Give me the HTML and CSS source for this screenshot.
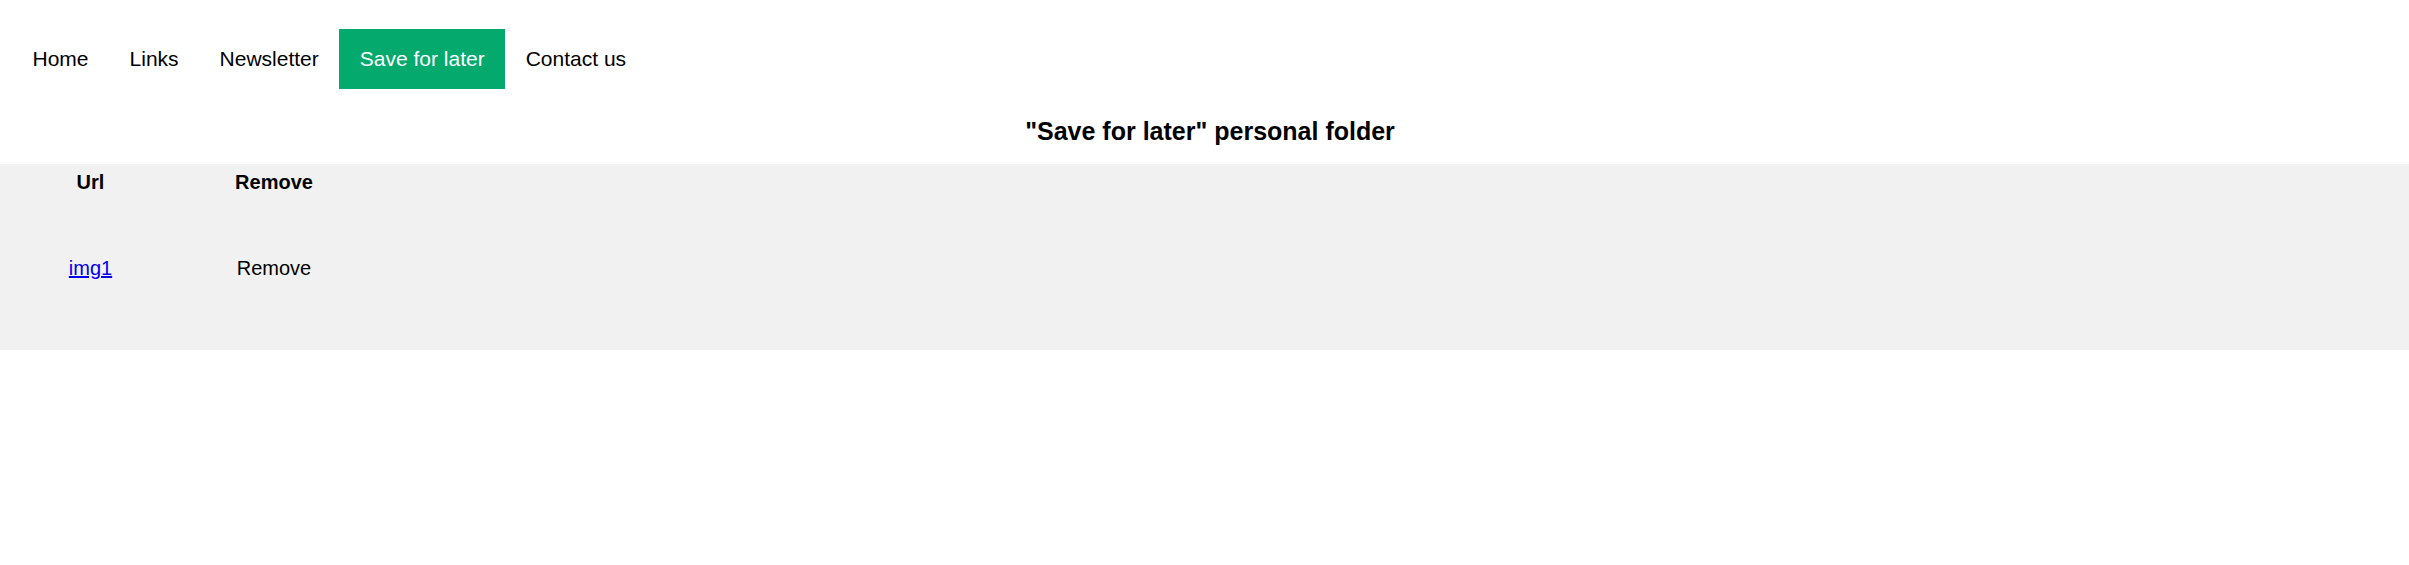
FILE: index.html
```html
<!DOCTYPE html>
<html lang="en">
<head>
<meta charset="utf-8">
<title>Save for later</title>
<link rel="stylesheet" href="styles.css">
</head>
<body>
<nav class="topnav">
  <a href="#" class="nav-link">Home</a>
  <a href="#" class="nav-link">Links</a>
  <a href="#" class="nav-link">Newsletter</a>
  <a href="#" class="nav-link active">Save for later</a>
  <a href="#" class="nav-link">Contact us</a>
</nav>
<h2 class="title">"Save for later" personal folder</h2>
<div class="saved">
  <table class="saved-table">
    <thead>
      <tr><th class="col-url">Url</th><th class="col-remove">Remove</th></tr>
    </thead>
    <tbody>
      <tr><td><a href="#" class="item-link">img1</a></td><td>Remove</td></tr>
    </tbody>
  </table>
</div>
</body>
</html>
```
FILE: styles.css
```css
html, body {
  margin: 0;
  padding: 0;
  background: #ffffff;
  font-family: "Liberation Sans", Arial, sans-serif;
  color: #000000;
}

.topnav {
  display: flex;
  margin: 29px 0 0 12px;
}

.nav-link {
  display: block;
  padding: 18px 20.5px;
  font-size: 21px;
  line-height: 24px;
  color: #000000;
  text-decoration: none;
}

.nav-link.active {
  background: #04aa6d;
  color: #ffffff;
}

.title {
  margin: 28px 0 18px;
  font-size: 25px;
  line-height: 29px;
  font-weight: bold;
  text-align: center;
  padding-left: 11px;
}

.saved {
  background: #f1f1f1;
}

.saved-table {
  border-collapse: collapse;
  font-size: 20px;
  line-height: 23px;
}

.saved-table th,
.saved-table td {
  padding: 0;
  text-align: center;
}

.saved-table th {
  padding-top: 7px;
  font-weight: bold;
}

.saved-table td {
  padding: 63px 0 70px;
}

.col-url {
  width: 181px;
}

.col-remove {
  width: 186px;
}

.item-link {
  color: #0000ee;
  text-decoration: underline;
}
```
